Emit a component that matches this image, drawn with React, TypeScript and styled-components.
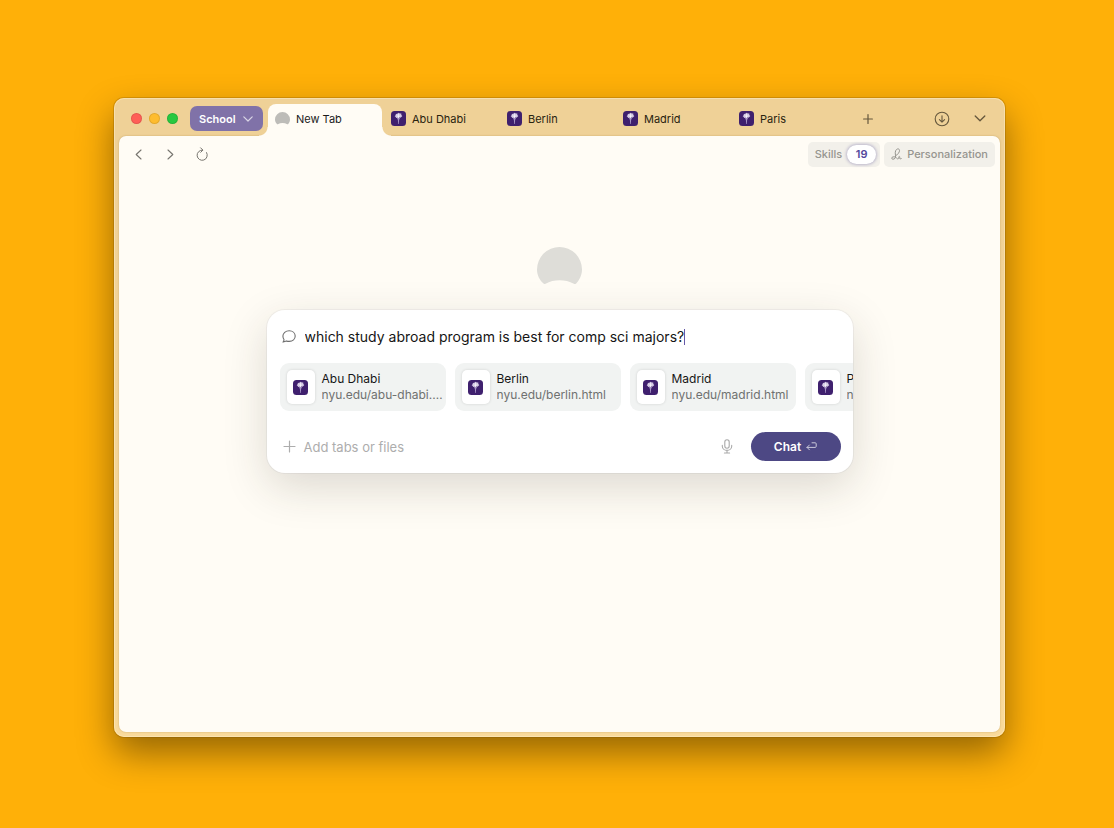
import React, { useState } from "react";
import styled, { createGlobalStyle, css } from "styled-components";

const GlobalStyle = createGlobalStyle`
  *, *::before, *::after { box-sizing: border-box; }
  body {
    margin: 0;
    background: #ffb008;
    color: #1d1c18;
    font-family: Inter, "Liberation Sans", sans-serif;
    font-size: 12px;
    line-height: 16px;
  }
  button, input { font: inherit; color: inherit; margin: 0; padding: 0; border: 0; background: none; }
  svg { display: block; flex: none; }
`;

const Desktop = styled.div`
  display: flex;
  min-height: 100vh;
  padding: 98px 109px 91px 114px;
`;

const BrowserWindow = styled.div`
  flex: 1;
  min-width: 0;
  display: flex;
  flex-direction: column;
  padding: 0 5px 5px;
  border-radius: 10px;
  background: linear-gradient(#efd197 0, #efd197 60px, #f9da9b 100%);
  box-shadow:
    inset 0 0 0 1px rgba(255, 240, 205, 0.45),
    0 0 0 1px rgba(120, 75, 0, 0.25),
    0 16px 36px rgba(0, 0, 0, 0.42);
`;

const TabStrip = styled.header`
  display: flex;
  align-items: center;
  height: 38px;
  padding: 3px 8px 0 12px;
`;

const Lights = styled.div`
  display: flex;
  gap: 7px;
  margin-right: 12px;
`;

const Light = styled.span<{ $color: string }>`
  width: 11px;
  height: 11px;
  border-radius: 50%;
  background: ${(p) => p.$color};
  box-shadow: inset 0 0 0 1px rgba(0, 0, 0, 0.1);
`;

const SpaceButton = styled.button`
  display: flex;
  align-items: center;
  justify-content: space-between;
  width: 73px;
  height: 25px;
  margin-right: 5px;
  padding: 0 10px 0 9px;
  border-radius: 7px;
  background: #8072a8;
  color: #fff;
  font-size: 11px;
  font-weight: 600;

  svg { opacity: 0.7; }
`;

const Tabs = styled.nav`
  align-self: stretch;
  flex: 0 1 578px;
  min-width: 0;
  display: flex;
  align-items: flex-end;
  gap: 2px;
`;

const Tab = styled.button<{ $active?: boolean }>`
  position: relative;
  flex: 1 1 0;
  min-width: 0;
  display: flex;
  align-items: center;
  gap: 6px;
  height: 32px;
  padding: 0 7px 3px;
  color: #29230f;
  font-size: 11px;
  ${(p) =>
    p.$active &&
    css`
      border-radius: 8px 8px 0 0;
      background: #fffcf5;
      color: #1b1b1b;

      &::before,
      &::after {
        content: "";
        position: absolute;
        bottom: 0;
        width: 9px;
        height: 9px;
      }
      &::before {
        right: 100%;
        background: radial-gradient(circle at 0 0, transparent 8px, #fffcf5 9px);
      }
      &::after {
        left: 100%;
        background: radial-gradient(circle at 100% 0, transparent 8px, #fffcf5 9px);
      }
    `}
`;

const IconButton = styled.button`
  display: grid;
  place-items: center;
  width: 24px;
  height: 24px;
  color: #65573c;
`;

const StripActions = styled.div`
  display: flex;
  gap: 14px;
  margin-left: auto;
`;

const NewTabButton = styled(IconButton)`
  margin-left: 10px;
`;

const Page = styled.main`
  flex: 1;
  display: flex;
  flex-direction: column;
  border-radius: 7px;
  background: #fffcf5;
  box-shadow: 0 0 2px rgba(120, 80, 10, 0.35);
`;

const Toolbar = styled.div`
  display: flex;
  align-items: center;
  justify-content: space-between;
  height: 36px;
  padding: 0 5px 0 7px;
`;

const ToolGroup = styled.div<{ $gap: number }>`
  display: flex;
  gap: ${(p) => p.$gap}px;
`;

const ToolIcon = styled(IconButton)`
  color: #77756f;
`;

const Pill = styled.button<{ $tight?: boolean }>`
  display: flex;
  align-items: center;
  gap: 5px;
  height: 25px;
  padding: ${(p) => (p.$tight ? "0 4px 0 7px" : "0 7px")};
  border-radius: 5px;
  background: #f2f0ea;
  color: #96958f;
  font-size: 11px;
  font-weight: 500;
`;

const Count = styled.span`
  width: 29px;
  border-radius: 10px;
  background: #fff;
  box-shadow: 0 0 3px 1px rgba(86, 76, 150, 0.35);
  color: #53489b;
  font-weight: 600;
  line-height: 19px;
  text-align: center;
`;

const Stage = styled.section`
  display: flex;
  flex-direction: column;
  align-items: center;
  padding: 75px 24px 24px;
`;

const Composer = styled.form`
  width: 100%;
  max-width: 586px;
  margin-top: 26px;
  overflow: hidden;
  border-radius: 18px;
  background: #fff;
  box-shadow:
    0 0 0 1px rgba(40, 40, 70, 0.05),
    0 14px 44px rgba(50, 40, 30, 0.17);
`;

const Prompt = styled.label`
  display: flex;
  align-items: center;
  height: 53px;
  padding: 0 15px;
  color: #6e6e6e;
`;

const PromptInput = styled.input`
  field-sizing: content;
  min-width: 1px;
  max-width: 100%;
  margin-left: 9px;
  outline: none;
  color: #151515;
  caret-color: transparent;
  font-size: 14px;
  line-height: 20px;
`;

const Caret = styled.span`
  width: 1px;
  height: 16px;
  background: #6558a8;
`;

const Chips = styled.div`
  display: flex;
  gap: 9px;
  padding-left: 13px;
  overflow: hidden;
`;

const Chip = styled.a`
  flex: none;
  width: 166px;
  display: flex;
  align-items: center;
  gap: 7px;
  height: 48px;
  padding: 0 2px 0 7px;
  border-radius: 9px;
  background: #f1f3f2;
  text-decoration: none;
`;

const Thumb = styled.span`
  display: grid;
  place-items: center;
  flex: none;
  width: 28px;
  height: 34px;
  border-radius: 5px;
  background: #fff;
  box-shadow: 0 0 3px rgba(0, 0, 0, 0.14);
`;

const ChipText = styled.span`
  min-width: 0;
  display: flex;
  flex-direction: column;
`;

const ChipTitle = styled.span`
  color: #161616;
`;

const ChipUrl = styled.span`
  overflow: hidden;
  color: #6f7170;
  text-overflow: ellipsis;
  white-space: nowrap;
`;

const Footer = styled.div`
  display: flex;
  align-items: center;
  height: 62px;
  padding: 9px 12px 0 16px;
`;

const AddButton = styled.button`
  display: flex;
  align-items: center;
  gap: 8px;
  color: #adadad;
  font-size: 13px;
`;

const MicButton = styled(IconButton)`
  margin: 0 12px 0 auto;
  color: #a9a9a9;
`;

const ChatButton = styled.button`
  display: flex;
  align-items: center;
  justify-content: center;
  gap: 5px;
  width: 90px;
  height: 29px;
  border-radius: 15px;
  background: #4d4884;
  color: #fff;
  font-size: 12px;
  font-weight: 600;

  svg { opacity: 0.7; }
`;

const Stroke = ({ w, h, d, sw = 1.2 }: { w: number; h: number; d: string; sw?: number }) => (
  <svg width={w} height={h} viewBox={`0 0 ${w} ${h}`} fill="none" stroke="currentColor" strokeWidth={sw} strokeLinecap="round" strokeLinejoin="round" aria-hidden="true">
    <path d={d} />
  </svg>
);

const Favicon = () => (
  <svg width="15" height="15" viewBox="0 0 15 15" aria-hidden="true">
    <rect width="15" height="15" rx="3.500" fill="#3f206e" />
    <path d="M7.6 1.700 8.8 2.500 10.300 2.600 10.300 3.900 11.300 4.900 10.400 6 9.300 6.700 8.300 6.600 7.500 7.500 6.600 6.800 5.200 7 4.700 6 3.700 5.200 4.600 4.200 4.900 3 6.300 2.700Z" fill="#d3c8e3" />
    <path d="M6 7 9 7 8.100 9 7.800 13H7.200L6.900 9Z" fill="#a795c4" />
    <path d="M7.500 3.200v3.600M6 4.500l1 1.200M9 4.500 8 5.700" stroke="#fff" strokeWidth=".7" />
  </svg>
);

const Dome = ({ size, color }: { size: number; color: string }) => (
  <svg width={size} height={(size * 37) / 45} viewBox="0 0 45 37" aria-hidden="true">
    <path d="M6.5 36.6C3 33.5 0 28.500 0 22.500a22.500 22.500 0 0 1 45 0c0 6-3 11-5.800 14.100-.7.6-1.500.5-2.300.1C28 32.100 17 32.100 8.500 36.700c-.8.4-1.400.4-2-.1Z" fill={color} />
  </svg>
);

const cities = [
  { name: "Abu Dhabi", url: "nyu.edu/abu-dhabi.html" },
  { name: "Berlin", url: "nyu.edu/berlin.html" },
  { name: "Madrid", url: "nyu.edu/madrid.html" },
  { name: "Paris", url: "nyu.edu/paris.html" },
];

export default function App() {
  const [query, setQuery] = useState("which study abroad program is best for comp sci majors?");

  return (
    <>
      <GlobalStyle />
      <Desktop>
        <BrowserWindow>
          <TabStrip>
            <Lights>
              <Light $color="#ff5f57" />
              <Light $color="#febc2e" />
              <Light $color="#28c840" />
            </Lights>
            <SpaceButton type="button">
              School
              <Stroke w={10} h={6} d="M.8.8 5 5 9.200.8" />
            </SpaceButton>
            <Tabs aria-label="Tabs">
              <Tab type="button" $active aria-current="page">
                <Dome size={15} color="#bdbcb8" />
                New Tab
              </Tab>
              {cities.map((c) => (
                <Tab type="button" key={c.name}>
                  <Favicon />
                  {c.name}
                </Tab>
              ))}
            </Tabs>
            <NewTabButton type="button" aria-label="New tab">
              <Stroke w={10} h={10} d="M5 .6v8.800M.6 5h8.800" />
            </NewTabButton>
            <StripActions>
              <IconButton type="button" aria-label="Downloads">
                <Stroke w={16} h={16} sw={1.1} d="M14.800 8A6.800 6.800 0 1 1 1.200 8a6.800 6.800 0 0 1 13.600 0ZM8 4.700v6.400M5.400 8.600 8 11.200l2.600-2.600" />
              </IconButton>
              <IconButton type="button" aria-label="More tabs">
                <Stroke w={12} h={7} sw={1.3} d="M1.200 1 6 5.800 10.800 1" />
              </IconButton>
            </StripActions>
          </TabStrip>
          <Page>
            <Toolbar>
              <ToolGroup $gap={8}>
                <ToolIcon type="button" aria-label="Back">
                  <Stroke w={7} h={11} sw={1.1} d="M6 1 1.200 5.500 6 10" />
                </ToolIcon>
                <ToolIcon type="button" aria-label="Forward">
                  <Stroke w={7} h={11} sw={1.1} d="M1 1 5.800 5.500 1 10" />
                </ToolIcon>
                <ToolIcon type="button" aria-label="Reload">
                  <Stroke w={12} h={14} sw={1} d="M10.600 5.600A5.100 5.100 0 1 1 6.600 3.100M4.600.8 6.900 3.100 4.700 5.300" />
                </ToolIcon>
              </ToolGroup>
              <ToolGroup $gap={4}>
                <Pill type="button" $tight>
                  Skills <Count>19</Count>
                </Pill>
                <Pill type="button">
                  <Stroke w={11} h={12} sw={1} d="M4.200 8.200C6.800 6.500 8.700 4.300 8.500 2.300 8.300.3 5.800.4 4.700 2.600 3.700 4.700 4.800 7.300 4.500 9.200 4.200 11.300.9 12 .7 10.200.6 8.700 3.300 8.400 4.700 9.300 6 10.200 6.300 11.200 7.200 10.800 8.200 10.300 7.300 8.400 8.300 8.400 9.200 8.400 8.300 10.700 9.200 11 9.700 11.100 10.100 10.800 10.500 10.300" />
                  Personalization
                </Pill>
              </ToolGroup>
            </Toolbar>
            <Stage>
              <Dome size={45} color="#deddd8" />
              <Composer onSubmit={(e) => e.preventDefault()}>
                <Prompt>
                  <Stroke w={14} h={13} sw={1.1} d="M7.200.8c3.500 0 6 2.300 6 5.300s-2.500 5.300-6 5.300c-1 0-1.800-.1-2.600-.5L1 12.100c.8-.8 1-1.700 1-2.600C1.300 8.600.9 7.400.9 6.100c0-3 2.700-5.300 6.300-5.300Z" />
                  <PromptInput aria-label="Question" value={query} onChange={(e) => setQuery(e.target.value)} />
                  <Caret />
                </Prompt>
                <Chips>
                  {cities.map((c) => (
                    <Chip href={`#${c.name}`} key={c.name}>
                      <Thumb>
                        <Favicon />
                      </Thumb>
                      <ChipText>
                        <ChipTitle>{c.name}</ChipTitle>
                        <ChipUrl>{c.url}</ChipUrl>
                      </ChipText>
                    </Chip>
                  ))}
                </Chips>
                <Footer>
                  <AddButton type="button">
                    <Stroke w={13} h={13} d="M6.500 1v11M1 6.500h11" />
                    Add tabs or files
                  </AddButton>
                  <MicButton type="button" aria-label="Dictate">
                    <Stroke w={12} h={15} sw={1.1} d="M6 .8a2.200 2.200 0 0 1 2.200 2.200v4a2.200 2.200 0 0 1-4.400 0V3A2.200 2.200 0 0 1 6 .8ZM1.300 6.400V7.200a4.700 4.200 0 0 0 9.400 0V6.400M6 11.400V14M3.400 14h5.200" />
                  </MicButton>
                  <ChatButton type="submit">
                    Chat
                    <Stroke w={11} h={9} sw={1} d="M6 .8h3.200a1 1 0 0 1 1 1v2.600a1 1 0 0 1-1 1H1M3.400 3 1 5.400l2.400 2.400" />
                  </ChatButton>
                </Footer>
              </Composer>
            </Stage>
          </Page>
        </BrowserWindow>
      </Desktop>
    </>
  );
}
